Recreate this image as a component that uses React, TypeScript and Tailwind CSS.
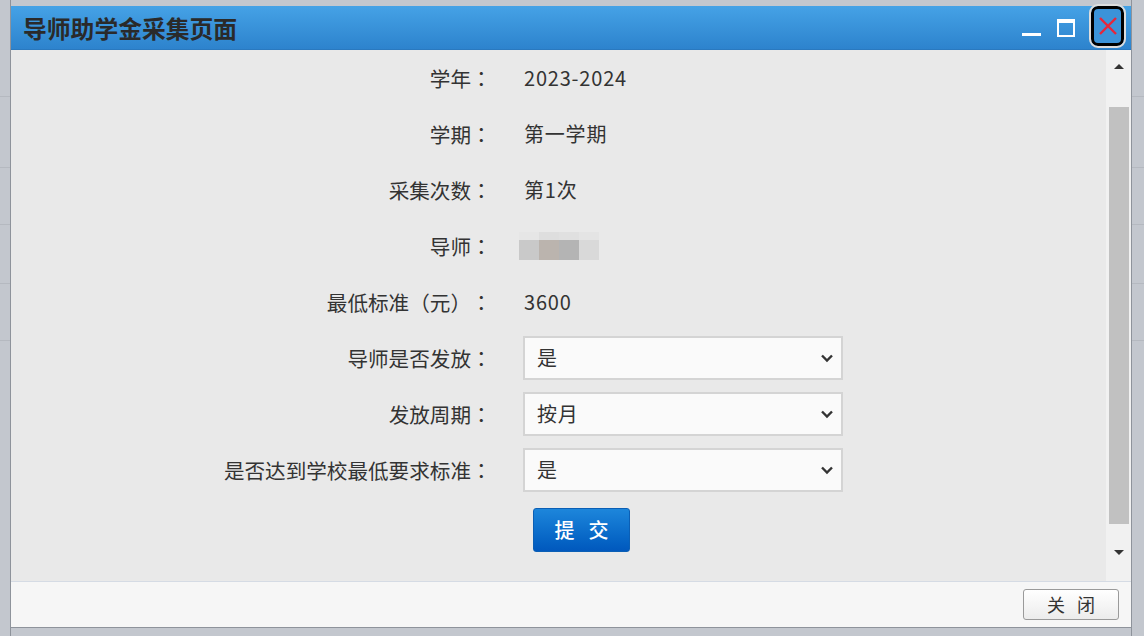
import React from "react";

const font = "font-['Microsoft_YaHei','Noto_Sans_CJK_SC',sans-serif]";

type Row = { label: string; value?: string; select?: string; blur?: boolean };

const rows: Row[] = [
  { label: "学年", value: "2023-2024" },
  { label: "学期", value: "第一学期" },
  { label: "采集次数", value: "第1次" },
  { label: "导师", blur: true },
  { label: "最低标准（元）", value: "3600" },
  { label: "导师是否发放", select: "是" },
  { label: "发放周期", select: "按月" },
  { label: "是否达到学校最低要求标准", select: "是" },
];

const Chevron = () => (
  <svg width="16" height="16" viewBox="0 0 16 16" className="text-[#333]">
    <path d="M3 5.5 8 10.5 13 5.5" fill="none" stroke="currentColor" strokeWidth="2.4" />
  </svg>
);

const SelectBox = ({ value }: { value: string }) => (
  <div className="-ml-[1px] flex h-[44px] w-[320px] items-center justify-between border-2 border-[#d4d4d4] bg-[#fafafa] pl-[12px] pr-[6px] text-[20px] text-[#333]">
    <span>{value}</span>
    <Chevron />
  </div>
);

// blurred teacher name, mosaic blocks
const Blurred = () => (
  <div className="-ml-[5px] flex flex-col">
    <div className="flex h-[8px]">
      <div className="w-[20px] bg-[#e6e6e6]" />
      <div className="w-[20px] bg-[#dedede]" />
      <div className="w-[20px] bg-[#e0e0e0]" />
      <div className="w-[20px] bg-[#e4e4e4]" />
    </div>
    <div className="flex h-[20px]">
      <div className="w-[20px] bg-[#c9c9c9]" />
      <div className="w-[20px] bg-[#bbb4ae]" />
      <div className="w-[20px] bg-[#b4b4b4]" />
      <div className="w-[20px] bg-[#d9d9d9]" />
    </div>
  </div>
);

const FormRow = ({ row }: { row: Row }) => (
  <div className="flex h-[56px] items-center">
    <div className="flex w-[480px] justify-end text-[20.6px] text-[#333]">
      <span>{row.label}</span>
      <span className="w-[20px] text-center font-['Noto_Sans_CJK_JP',sans-serif]">：</span>
    </div>
    <div className="ml-[33px] flex items-center text-[20px] tracking-[0.8px] text-[#333]">
      {row.select ? (
        <SelectBox value={row.select} />
      ) : row.blur ? (
        <Blurred />
      ) : (
        <span>{row.value}</span>
      )}
    </div>
  </div>
);

const Scrollbar = () => (
  <div className="flex w-[25px] flex-col items-center bg-[#f1f1f1]">
    <div className="flex h-[32px] items-center">
      <div className="h-0 w-0 border-x-[5px] border-b-[5px] border-x-transparent border-b-[#333]" />
    </div>
    <div className="mt-[25px] h-[417px] w-[20px] bg-[#c1c1c1]" />
    <div className="flex flex-1 items-center">
      <div className="h-0 w-0 border-x-[5px] border-t-[5px] border-x-transparent border-t-[#333]" />
    </div>
  </div>
);

const BgStrip = () => (
  <div className="flex w-full flex-col">
    <div className="h-[96px]" />
    <div className="h-[1px] w-full bg-[#b5b9c0]" />
    <div className="h-[70px]" />
    <div className="h-[1px] w-full bg-[#b5b9c0]" />
    <div className="h-[56px]" />
    <div className="h-[1px] w-full bg-[#b5b9c0]" />
    <div className="h-[58px]" />
    <div className="h-[1px] w-full bg-[#b5b9c0]" />
    <div className="h-[56px]" />
    <div className="h-[1px] w-full bg-[#b5b9c0]" />
  </div>
);

export default function App() {
  return (
    <div className={`flex h-[636px] w-[1144px] bg-[#c3c7ce] ${font}`}>
      <div className="w-[11px] border-r border-[#8e939b]">
        <BgStrip />
      </div>
      <div className="flex flex-1 flex-col pt-[6px] pb-[8px]">
        <div className="flex flex-1 flex-col border-b border-[#8e939b] bg-[#e9e9e9]">
          {/* title bar */}
          <div className="flex h-[44px] items-center border-b border-[#2a79bf] bg-gradient-to-b from-[#45a2e6] to-[#2d83cd] pl-[12px]">
            <div className="flex-1 text-[23.8px] font-semibold text-[#2a2a2a]">导师助学金采集页面</div>
            <div className="flex items-center gap-[16px] pr-[7px]">
              <div className="mt-[14px] h-[3px] w-[19px] bg-white" />
              <div className="h-[18px] w-[18px] border-2 border-t-[4px] border-white" />
              <div className="mb-[3px] flex h-[40px] w-[33px] items-center justify-center rounded-[7px] border-[3px] border-black bg-[#3b93d9] outline outline-2 outline-[#ddd]">
                <svg width="22" height="22" viewBox="0 0 22 22">
                  <path d="M3 3 19 19M19 3 3 19" stroke="#e8263a" strokeWidth="2.4" />
                </svg>
              </div>
            </div>
          </div>
          {/* body */}
          <div className="flex flex-1">
            <div className="flex flex-1 flex-col">
              {rows.map((r) => (
                <FormRow key={r.label} row={r} />
              ))}
              <div className="ml-[522px] mt-[10px]">
                <button className="h-[44px] w-[97px] rounded-[3px] border border-[#0b5fb5] bg-gradient-to-b from-[#1d86db] to-[#0158bd] pl-[14px] text-[20px] font-medium tracking-[14px] text-white">
                  提交
                </button>
              </div>
            </div>
            <Scrollbar />
          </div>
          {/* footer */}
          <div className="flex h-[46px] items-start justify-end border-t border-[#d5dbe4] bg-[#f6f6f6] pr-[12px] pt-[7px]">
            <button className="h-[31px] w-[96px] rounded-[3px] border border-[#9a9a9a] bg-gradient-to-b from-[#ffffff] to-[#ececec] pl-[12px] text-[18px] tracking-[12px] text-[#333]">
              关闭
            </button>
          </div>
        </div>
      </div>
      <div className="w-[13px] border-l border-[#8e939b]">
        <BgStrip />
      </div>
    </div>
  );
}
